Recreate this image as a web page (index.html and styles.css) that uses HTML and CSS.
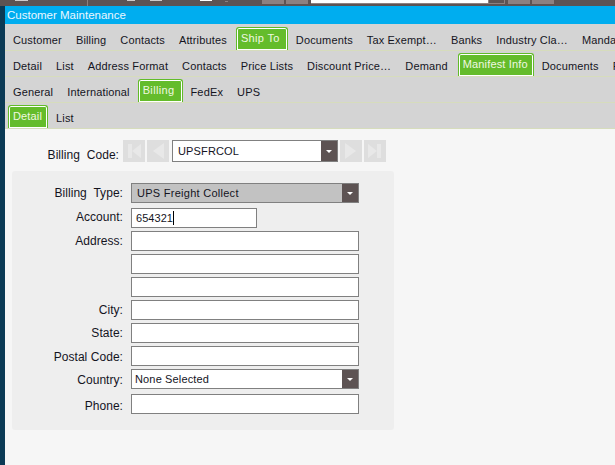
FILE: index.html
```html
<!DOCTYPE html>
<html lang="en">
<head>
  <meta charset="UTF-8">
  <title>Customer Maintenance</title>
  <link rel="stylesheet" href="styles.css">
</head>
<body>
  <!-- what is left of the toolbar above the window -->
  <div class="toolbar">
    <span class="tool tool-a"></span>
    <span class="tool-line"></span>
    <span class="tool tool-b"></span>
    <span class="tool tool-c"></span>
    <span class="tool tool-d"></span>
    <span class="tool tool-e"></span>
    <span class="tool-btn tool-btn-first"></span>
    <span class="tool-btn"></span>
    <span class="tool-input"></span>
    <span class="tool-drop"></span>
    <span class="tool-btn tool-btn-next"></span>
    <span class="tool-btn"></span>
  </div>

  <div class="window">
    <div class="title">Customer Maintenance</div>

    <div class="tabs tabs-first">
      <span class="tab">Customer</span>
      <span class="tab">Billing</span>
      <span class="tab">Contacts</span>
      <span class="tab">Attributes</span>
      <span class="tab active tab-roomy">Ship To</span>
      <span class="tab">Documents</span>
      <span class="tab">Tax Exempt…</span>
      <span class="tab">Banks</span>
      <span class="tab">Industry Cla…</span>
      <span class="tab">Mandates</span>
    </div>
    <div class="tabs">
      <span class="tab">Detail</span>
      <span class="tab">List</span>
      <span class="tab">Address Format</span>
      <span class="tab">Contacts</span>
      <span class="tab">Price Lists</span>
      <span class="tab">Discount Price…</span>
      <span class="tab">Demand</span>
      <span class="tab active tab-wide">Manifest Info</span>
      <span class="tab">Documents</span>
      <span class="tab">Phone</span>
    </div>
    <div class="tabs">
      <span class="tab">General</span>
      <span class="tab">International</span>
      <span class="tab active tab-tight tab-roomy">Billing</span>
      <span class="tab">FedEx</span>
      <span class="tab">UPS</span>
    </div>
    <div class="tabs">
      <span class="tab active">Detail</span>
      <span class="tab">List</span>
    </div>

    <div class="content">
      <div class="code-row">
        <label class="code-label">Billing&nbsp; Code:</label>
        <span class="nav-btn">
          <svg width="22" height="22" viewBox="0 0 22 22"><rect x="5" y="4" width="4" height="14"/><path d="M18 4v14l-9-7z"/></svg>
        </span>
        <span class="nav-btn">
          <svg width="22" height="22" viewBox="0 0 22 22"><path d="M17 3v16l-11-8z"/></svg>
        </span>
        <div class="select code-select">
          <span class="select-text">UPSFRCOL</span>
          <span class="select-arrow"></span>
        </div>
        <span class="nav-btn">
          <svg width="22" height="22" viewBox="0 0 22 22"><path d="M5 3v16l11-8z"/></svg>
        </span>
        <span class="nav-btn">
          <svg width="22" height="22" viewBox="0 0 22 22"><path d="M4 4v14l9-7z"/><rect x="13" y="4" width="4" height="14"/></svg>
        </span>
      </div>

      <div class="panel">
        <div class="row row-type">
          <label class="label">Billing&nbsp; Type:</label>
          <div class="select type-select">
            <span class="select-text">UPS Freight Collect</span>
            <span class="select-arrow"></span>
          </div>
        </div>
        <div class="row">
          <label class="label label-high">Account:</label>
          <div class="input input-short">654321<span class="caret"></span></div>
        </div>
        <div class="row">
          <label class="label">Address:</label>
          <div class="input"></div>
        </div>
        <div class="row">
          <label class="label"></label>
          <div class="input"></div>
        </div>
        <div class="row">
          <label class="label"></label>
          <div class="input"></div>
        </div>
        <div class="row">
          <label class="label">City:</label>
          <div class="input"></div>
        </div>
        <div class="row">
          <label class="label">State:</label>
          <div class="input"></div>
        </div>
        <div class="row">
          <label class="label label-low">Postal Code:</label>
          <div class="input"></div>
        </div>
        <div class="row">
          <label class="label label-low">Country:</label>
          <div class="select country-select">
            <span class="select-text">None Selected</span>
            <span class="select-arrow"></span>
          </div>
        </div>
        <div class="row row-phone">
          <label class="label label-lower">Phone:</label>
          <div class="input"></div>
        </div>
      </div>
    </div>
  </div>
</body>
</html>
```

FILE: styles.css
```css
html, body {
  margin: 0;
  height: 100%;
  overflow: hidden;
}
body {
  font-family: "Liberation Sans", Arial, sans-serif;
  font-size: 12px;
  letter-spacing: 0.05px;
  color: #14141e;
  background: #5d5353;
}

/* toolbar strip */
.toolbar {
  height: 6px;
  display: flex;
  align-items: flex-start;
  background: #5d5353;
}
.tool {
  display: block;
  background: #cfcaca;
}
.tool-a {
  width: 13px;
  height: 1px;
  margin-left: 15px;
}
.tool-line {
  width: 1px;
  height: 6px;
  margin-left: 59px;
  background: #8c8080;
}
.tool-b {
  width: 8px;
  height: 1px;
  margin-left: 39px;
}
.tool-c {
  width: 12px;
  height: 1px;
  margin-left: 15px;
}
.tool-d {
  width: 12px;
  height: 1px;
  margin-left: 38px;
  background: #fff;
}
.tool-e {
  width: 3px;
  height: 1px;
  margin: 1px 0 0 13px;
  background: #8c8080;
}
.tool-btn {
  width: 22px;
  height: 4px;
  margin-left: 2px;
  background: #8c8080;
}
.tool-btn-first {
  margin-left: 34px;
}
.tool-btn-next {
  margin-left: 3px;
}
.tool-input {
  width: 177px;
  height: 3px;
  margin-left: 3px;
  background: #fff;
  border-bottom: 1px solid #8c8080;
}
.tool-drop {
  width: 15px;
  height: 3px;
  background: #5d5353;
  border: solid #8c8080;
  border-width: 0 1px 1px;
}

/* window */
.window {
  height: 459px;
  border-left: 5px solid #0b3a55;
  background: #f6f6f6;
  display: flex;
  flex-direction: column;
}
.title {
  height: 18px;
  padding-left: 2px;
  background: #00adef;
  color: #eaf7ff;
  font-size: 11.5px;
  line-height: 18px;
  letter-spacing: 0;
}

/* tab rows */
.tabs {
  height: 25px;
  flex: none;
  padding-left: 1px;
  display: flex;
  align-items: flex-end;
  overflow: hidden;
  white-space: nowrap;
  background: #d4d4d4;
  border-bottom: 1px solid #d6dcbc;
  font-size: 11px;
  letter-spacing: 0.15px;
}
.tabs-first {
  height: 26px;
}
.tab {
  flex: none;
  padding: 0 7px 3px;
  line-height: 14px;
}
.tab.active {
  margin: 0 1px 0 2px;
  padding: 3px 5px 5px 4px;
  border: 1px solid #62bb2a;
  border-bottom: 0;
  border-radius: 3px 3px 0 0;
  box-shadow: inset 0 0 0 1px #fff;
  background: #64bc2b;
  color: #f0f8e0;
}
.tab.tab-wide {
  margin-left: 3px;
}
.tab.tab-tight {
  margin-left: 1px;
}
.tab.tab-roomy {
  padding-right: 7px;
  letter-spacing: 0.35px;
}

/* billing code row */
.content {
  padding: 11px 0 0 7px;
  flex: 1;
}
.code-row {
  height: 22px;
  display: flex;
  align-items: stretch;
}
.code-label {
  width: 107px;
  padding: 8px 4px 0 0;
  text-align: right;
  line-height: 14px;
}
.nav-btn {
  width: 22px;
  height: 22px;
  background: #dedede;
}
.nav-btn + .nav-btn {
  margin-left: 2px;
}
.nav-btn svg {
  display: block;
  fill: #e8e8e8;
}
.select {
  box-sizing: border-box;
  display: flex;
  align-items: stretch;
  background: #fff;
  border: 1px solid #808080;
}
.select-text {
  flex: 1;
  padding-left: 5px;
  font-size: 11px;
  letter-spacing: 0.15px;
}
.select-arrow {
  width: 16px;
  background: #5d5353;
  position: relative;
}
.select-arrow::after {
  content: "";
  position: absolute;
  left: 5px;
  top: 50%;
  margin-top: -1px;
  border: solid transparent;
  border-width: 3px 3px 0;
  border-top-color: #fff;
}
.code-select {
  width: 166px;
  margin: 0 2px 0 3px;
}
.code-select .select-text {
  line-height: 21px;
}

/* form panel */
.panel {
  width: 382px;
  height: 259px;
  box-sizing: border-box;
  margin-top: 9px;
  padding-top: 12px;
  background: #eeeeee;
  border-radius: 3px;
}
.row {
  height: 20px;
  margin-bottom: 3px;
  display: flex;
}
.row-type {
  margin-bottom: 5px;
}
.row-phone {
  margin-top: 5px;
}
.label {
  width: 111px;
  text-align: right;
  line-height: 20px;
}
.label-high {
  line-height: 18px;
}
.label-low {
  line-height: 22px;
}
.label-lower {
  line-height: 24px;
}
.input,
.select.type-select,
.select.country-select {
  width: 228px;
  height: 20px;
  margin-left: 8px;
  box-sizing: border-box;
}
.input {
  background: #fff;
  border: 1px solid #808080;
  padding-left: 4px;
  font-size: 11px;
  line-height: 19px;
}
.input.input-short {
  width: 126px;
}
.caret {
  display: inline-block;
  width: 1px;
  height: 14px;
  background: #000;
  vertical-align: -3px;
}
.type-select {
  background: #c2c2c2;
}
.type-select .select-text,
.country-select .select-text {
  line-height: 18px;
}
.type-select .select-text {
  letter-spacing: 0.27px;
}
.country-select .select-text {
  padding-left: 3px;
}
```
